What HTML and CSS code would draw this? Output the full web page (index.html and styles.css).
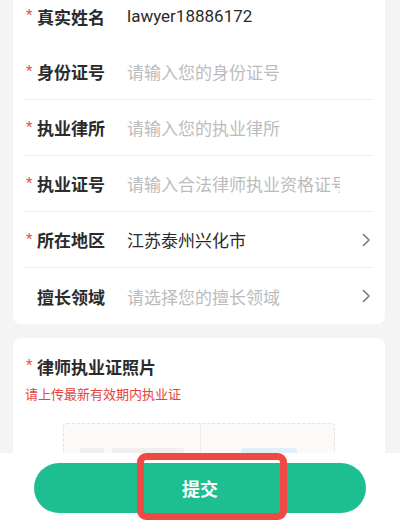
FILE: index.html
```html
<!DOCTYPE html>
<html lang="zh">
<head>
<meta charset="utf-8">
<title>律师认证</title>
<link rel="stylesheet" href="styles.css">
</head>
<body>
<div class="page">
  <main class="scroll">
    <section class="card form-card">
      <div class="row no-line">
        <span class="star">*</span><span class="label">真实姓名</span>
        <span class="value">lawyer18886172</span>
      </div>
      <div class="row">
        <span class="star">*</span><span class="label">身份证号</span>
        <span class="value ph">请输入您的身份证号</span>
      </div>
      <div class="row">
        <span class="star">*</span><span class="label">执业律所</span>
        <span class="value ph">请输入您的执业律所</span>
      </div>
      <div class="row">
        <span class="star">*</span><span class="label">执业证号</span>
        <span class="value ph">请输入合法律师执业资格证号</span>
      </div>
      <div class="row">
        <span class="star">*</span><span class="label">所在地区</span>
        <span class="value">江苏泰州兴化市</span>
        <svg class="chev" width="9" height="14" viewBox="0 0 9 14"><polyline points="1.5,1.5 7,7 1.5,12.5" fill="none" stroke="#777" stroke-width="1.6" stroke-linecap="round" stroke-linejoin="round"/></svg>
      </div>
      <div class="row no-line">
        <span class="star blank"></span><span class="label">擅长领域</span>
        <span class="value ph">请选择您的擅长领域</span>
        <svg class="chev" width="9" height="14" viewBox="0 0 9 14"><polyline points="1.5,1.5 7,7 1.5,12.5" fill="none" stroke="#777" stroke-width="1.6" stroke-linecap="round" stroke-linejoin="round"/></svg>
      </div>
    </section>

    <section class="card photo-card">
      <div class="photo-title"><span class="star">*</span><span class="title-text">律师执业证照片</span></div>
      <div class="note">请上传最新有效期内执业证</div>
      <div class="upload">
        <div class="half">
          <div class="bars"><span class="bar b1"></span><span class="bar b2"></span></div>
        </div>
        <div class="half right">
          <div class="bars"><span class="bar b3"></span></div>
        </div>
      </div>
    </section>
  </main>

  <footer class="footer">
    <div class="btn-wrap">
      <button class="submit">提交</button>
      <span class="mark"></span>
    </div>
  </footer>
</div>
</body>
</html>
```

FILE: styles.css
```css
* { box-sizing: border-box; }
html, body { margin: 0; padding: 0; }
body {
  background: #f4f4f4;
  font-family: Roboto, "Noto Sans CJK SC", sans-serif;
  color: #333;
}
.page {
  width: 400px;
  height: 523px;
  display: flex;
  flex-direction: column;
  overflow: hidden;
}
.scroll {
  flex: 1;
  overflow: hidden;
  padding: 0 15px 0 13px;
}
.card {
  background: #fff;
  border-radius: 8px;
}
.form-card {
  margin-top: -20px;
  padding: 8px 12px 0 12px;
}
.row {
  height: 56px;
  display: flex;
  align-items: center;
  border-bottom: 1px solid #efefef;
}
.row.no-line { border-bottom: none; }
.star {
  width: 12px;
  color: #f0503f;
  font-size: 15px;
  line-height: 1;
  padding-left: 1px;
  align-self: center;
  margin-top: -1px;
}
.label {
  width: 90px;
  font-family: "Noto Sans CJK SC", sans-serif;
  font-size: 17px;
  font-weight: 700;
  color: #2b2b2b;
}
.value {
  width: 213px;
  overflow: hidden;
  white-space: nowrap;
  font-size: 17px;
  color: #2b2b2b;
}
.value.ph { color: #bcbcbc; font-family: "Noto Sans CJK SC", sans-serif; }
.chev { margin-left: auto; margin-right: 2px; }

.photo-card {
  margin-top: 14px;
  padding: 16px 12px 40px 12px;
}
.photo-title {
  display: flex;
  align-items: center;
  height: 24px;
}
.title-text {
  font-family: "Noto Sans CJK SC", sans-serif;
  font-size: 17px;
  font-weight: 700;
  color: #2b2b2b;
}
.note {
  margin-top: 7px;
  font-family: "Noto Sans CJK SC", sans-serif;
  font-size: 13px;
  line-height: 18px;
  color: #e8413c;
}
.upload {
  margin: 20px auto 0;
  width: 272px;
  height: 90px;
  border: 1px dashed #e6e4e2;
  border-radius: 4px;
  background: #fbfaf9;
  display: flex;
}
.half {
  flex: 1;
  padding: 24px 16px 0;
}
.half.right { border-left: 1px solid #eeecea; }
.bars { display: flex; gap: 8px; }
.bar { height: 8px; border-radius: 3px; display: block; }
.b1 { width: 24px; background: #f1efee; }
.b2 { width: 72px; background: #f1efee; }
.b3 { width: 56px; background: #e2eff8; margin-left: 24px; }

.footer {
  height: 70px;
  background: #fff;
  padding: 10px 34px 0;
}
.btn-wrap { position: relative; }
.submit {
  display: block;
  width: 100%;
  height: 50px;
  border: none;
  border-radius: 25px;
  background: #1dbe8f;
  color: #fff;
  font-family: "Noto Sans CJK SC", sans-serif;
  font-size: 18px;
  font-weight: 700;
  padding: 0;
}
.mark {
  position: absolute;
  left: 103px;
  top: -10px;
  width: 150px;
  height: 67px;
  border: 7px solid #ef4944;
  border-radius: 9px;
  pointer-events: none;
}
```
